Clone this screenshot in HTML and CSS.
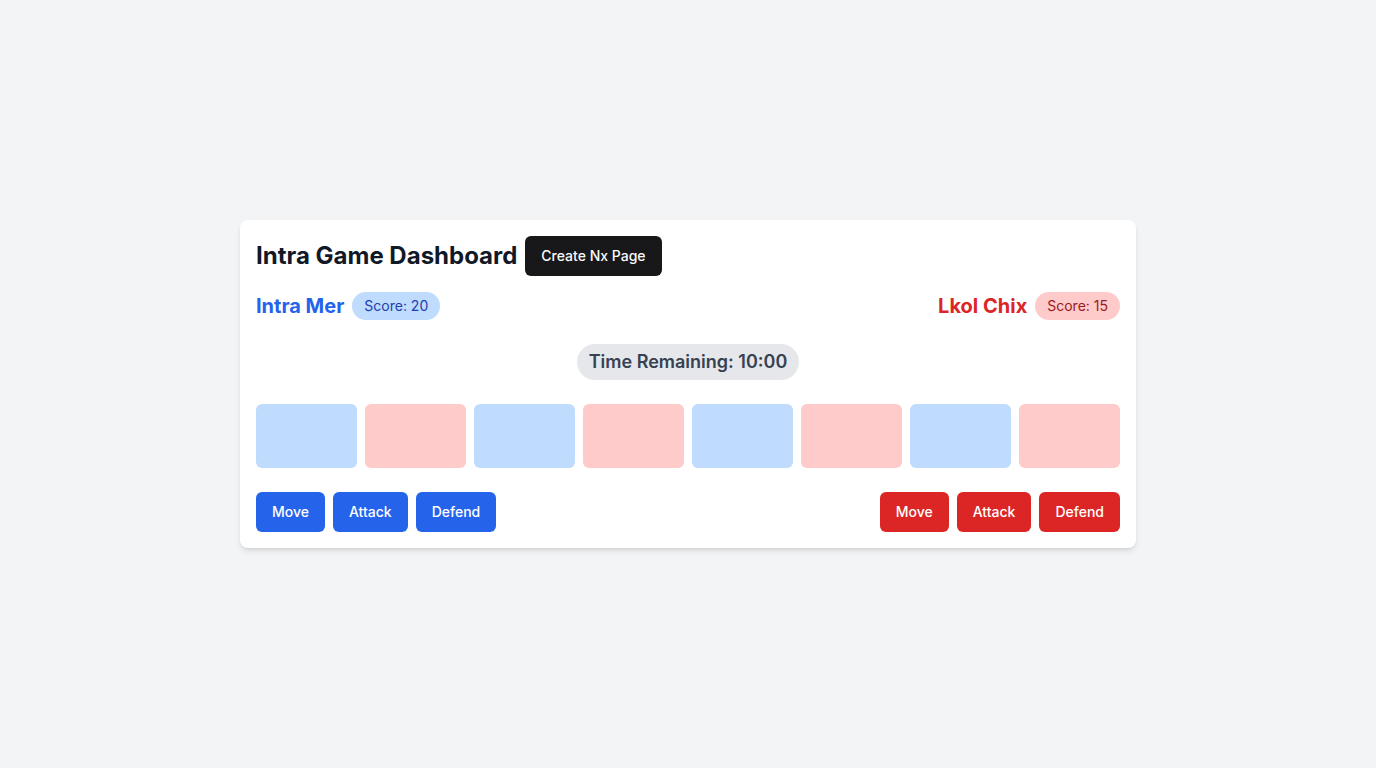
FILE: index.html
```html
<!DOCTYPE html>
<html lang="en">
<head>
<meta charset="utf-8">
<title>Intra Game Dashboard</title>
<link rel="stylesheet" href="styles.css">
</head>
<body>
<main class="page">
  <section class="card">
    <header class="title-row">
      <h1 class="title">Intra Game Dashboard</h1>
      <button class="btn btn-dark">Create Nx Page</button>
    </header>
    <div class="teams">
      <div class="team">
        <span class="team-name blue-text">Intra Mer</span>
        <span class="badge badge-blue">Score: 20</span>
      </div>
      <div class="team">
        <span class="team-name red-text">Lkol Chix</span>
        <span class="badge badge-red">Score: 15</span>
      </div>
    </div>
    <div class="timer-row">
      <span class="timer">Time Remaining: 10:00</span>
    </div>
    <div class="board">
      <div class="cell cell-blue"></div>
      <div class="cell cell-red"></div>
      <div class="cell cell-blue"></div>
      <div class="cell cell-red"></div>
      <div class="cell cell-blue"></div>
      <div class="cell cell-red"></div>
      <div class="cell cell-blue"></div>
      <div class="cell cell-red"></div>
    </div>
    <div class="actions">
      <div class="action-group">
        <button class="btn btn-blue">Move</button>
        <button class="btn btn-blue">Attack</button>
        <button class="btn btn-blue">Defend</button>
      </div>
      <div class="action-group">
        <button class="btn btn-red">Move</button>
        <button class="btn btn-red">Attack</button>
        <button class="btn btn-red">Defend</button>
      </div>
    </div>
  </section>
</main>
</body>
</html>
```
FILE: styles.css
```css
* { box-sizing: border-box; }
html, body { margin: 0; padding: 0; }
body {
  background: #f3f4f6;
  font-family: Inter, "Noto Sans", "Liberation Sans", sans-serif;
  color: #111827;
}
.page {
  min-height: 768px;
  display: flex;
  align-items: center;
  justify-content: center;
}
.card {
  width: 896px;
  background: #ffffff;
  border-radius: 8px;
  padding: 16px;
  box-shadow: 0 4px 6px -1px rgba(0,0,0,0.1), 0 2px 4px -2px rgba(0,0,0,0.1);
}
.title-row {
  display: flex;
  align-items: center;
  gap: 8px;
  margin-bottom: 16px;
}
.title {
  margin: 0;
  font-size: 24px;
  line-height: 32px;
  font-weight: 700;
  color: #111827;
}
.btn {
  border: none;
  font-family: inherit;
  font-size: 14px;
  line-height: 20px;
  font-weight: 500;
  color: #ffffff;
  height: 40px;
  padding: 0 16px;
  border-radius: 6px;
  cursor: pointer;
}
.btn-dark { background: #18181b; color: #fafafa; }
.btn-blue { background: #2563eb; }
.btn-red { background: #dc2626; }
.teams {
  display: flex;
  justify-content: space-between;
  align-items: center;
  margin-bottom: 24px;
}
.team {
  display: flex;
  align-items: center;
  gap: 8px;
}
.team-name {
  font-size: 20px;
  line-height: 28px;
  font-weight: 700;
}
.blue-text { color: #2563eb; }
.red-text { color: #dc2626; }
.badge {
  font-size: 14px;
  line-height: 20px;
  padding: 4px 12px;
  border-radius: 9999px;
}
.badge-blue { background: #bfdbfe; color: #1e40af; }
.badge-red { background: #fecaca; color: #991b1b; }
.timer-row {
  display: flex;
  justify-content: center;
  margin-bottom: 24px;
}
.timer {
  background: #e5e7eb;
  color: #374151;
  font-size: 18px;
  line-height: 28px;
  font-weight: 600;
  padding: 4px 12px;
  border-radius: 9999px;
}
.board {
  display: grid;
  grid-template-columns: repeat(8, 1fr);
  gap: 8px;
  margin-bottom: 24px;
}
.cell {
  height: 64px;
  border-radius: 6px;
}
.cell-blue { background: #bfdbfe; }
.cell-red { background: #fecaca; }
.actions {
  display: flex;
  justify-content: space-between;
}
.action-group {
  display: flex;
  gap: 8px;
}
```
